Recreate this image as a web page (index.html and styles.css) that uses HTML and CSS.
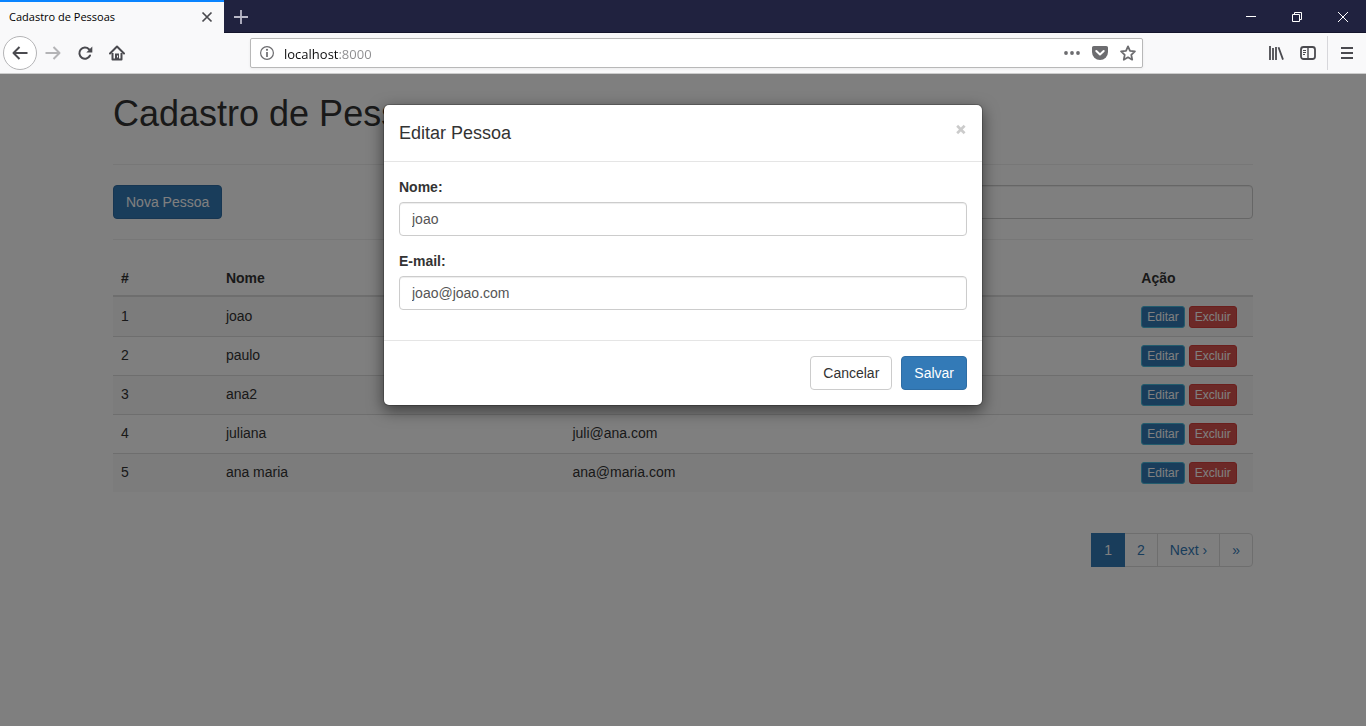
FILE: index.html
```html
<!DOCTYPE html>
<html lang="pt-BR">
<head>
<meta charset="utf-8">
<title>Cadastro de Pessoas</title>
<link rel="stylesheet" href="styles.css">
</head>
<body>
<header class="browser">
  <div class="tabbar">
    <div class="tab">
      <span class="tab-title">Cadastro de Pessoas</span>
      <button class="tab-close" type="button" aria-label="Fechar aba">
        <svg width="12" height="12" viewBox="0 0 12 12"><path d="M1.5 1.5l9 9M10.5 1.5l-9 9" stroke="#4a4a4f" stroke-width="1.7" fill="none"/></svg>
      </button>
    </div>
    <button class="new-tab" type="button" aria-label="Nova aba">
      <svg width="14" height="14" viewBox="0 0 14 14"><path d="M7 0v14M0 7h14" stroke="#b9b9c8" stroke-width="1.8" fill="none"/></svg>
    </button>
    <div class="window-controls">
      <button type="button" aria-label="Minimizar"><svg width="12" height="12" viewBox="0 0 12 12"><path d="M1 5.5h10" stroke="#fff" fill="none"/></svg></button>
      <button type="button" aria-label="Restaurar"><svg width="12" height="12" viewBox="0 0 12 12"><path d="M1.5 3.5h7v7h-7zM3.5 3.500v-2h7v7h-2" stroke="#fff" fill="none"/></svg></button>
      <button type="button" aria-label="Fechar"><svg width="12" height="12" viewBox="0 0 12 12"><path d="M1 1l10 10M11 1L1 11" stroke="#fff" fill="none"/></svg></button>
    </div>
  </div>
  <nav class="toolbar">
    <button class="tool back" type="button" aria-label="Voltar">
      <svg width="16" height="16" viewBox="0 0 16 16"><path d="M15.500 8H1.500M7.500 2l-6 6 6 6" stroke="#4a4a4f" stroke-width="2" stroke-linejoin="round" fill="none"/></svg>
    </button>
    <button class="tool" type="button" aria-label="Avançar">
      <svg width="16" height="16" viewBox="0 0 16 16"><path d="M0.500 8h14M8.500 2l6 6-6 6" stroke="#b4b4b6" stroke-width="2" stroke-linejoin="round" fill="none"/></svg>
    </button>
    <button class="tool" type="button" aria-label="Recarregar">
      <svg width="16" height="16" viewBox="0 0 16 16"><path d="M12 4.200A5.600 5.600 0 1 0 13 10.500" stroke="#4a4a4f" stroke-width="2" stroke-linecap="round" fill="none"/><path d="M15.300 1.500v6H9.300z" fill="#4a4a4f"/></svg>
    </button>
    <button class="tool" type="button" aria-label="Início">
      <svg width="16" height="16" viewBox="0 0 16 16"><path d="M1 8.500l7-7 7 7" stroke="#4a4a4f" stroke-width="2" stroke-linecap="round" stroke-linejoin="round" fill="none"/><path d="M3.500 8v6.500h9V8" stroke="#4a4a4f" stroke-width="2" fill="none" stroke-linejoin="round"/><path d="M6 8.500h4V15H6z" fill="#4a4a4f"/><path d="M8.500 10.500v2" stroke="#f9f9fa"/></svg>
    </button>
    <div class="urlbar">
      <svg class="info" width="14" height="14" viewBox="0 0 14 14"><circle cx="7" cy="7" r="6.400" stroke="#6c6c6f" stroke-width="1.200" fill="none"/><path d="M7 6v5" stroke="#6c6c6f" stroke-width="1.700"/><circle cx="7" cy="3.800" r="1.100" fill="#6c6c6f"/></svg>
      <input class="url" type="text" value="localhost:8000" aria-label="Endereço">
      <button class="url-action" type="button" aria-label="Ações da página">
        <svg width="16" height="16" viewBox="0 0 16 16" fill="#6c6c6f"><circle cx="2" cy="8" r="1.900"/><circle cx="8" cy="8" r="1.900"/><circle cx="14" cy="8" r="1.900"/></svg>
      </button>
      <button class="url-action" type="button" aria-label="Salvar no Pocket">
        <svg width="16" height="16" viewBox="0 0 16 16"><path d="M1.800 1h12.400C15.300 1 16 1.700 16 2.800V7a8 8 0 0 1-16 0V2.800C0 1.700.7 1 1.800 1z" fill="#6c6c6f"/><path d="M4.300 6L8 9.500 11.700 6" stroke="#fff" stroke-width="2" stroke-linecap="round" stroke-linejoin="round" fill="none"/></svg>
      </button>
      <button class="url-action" type="button" aria-label="Favoritar">
        <svg width="16" height="16" viewBox="0 0 16 16"><path d="M8 1.400l2 4.400 4.900.6-3.600 3.400.9 4.900L8 12.300l-4.200 2.400.9-4.900L1.100 6.400 6 5.800z" stroke="#6c6c6f" stroke-width="1.800" stroke-linejoin="round" fill="none"/></svg>
      </button>
    </div>
    <button class="tool" type="button" aria-label="Biblioteca">
      <svg width="16" height="16" viewBox="0 0 16 16"><path d="M2 1v14M5 3v12M8 2v13M10.500 2.300L15 14.600" stroke="#4a4a4f" stroke-width="1.800" fill="none"/></svg>
    </button>
    <button class="tool" type="button" aria-label="Barra lateral">
      <svg width="16" height="16" viewBox="0 0 16 16"><rect x="1" y="2" width="14" height="12" rx="2.500" stroke="#4a4a4f" stroke-width="1.800" fill="none"/><path d="M8 2v12" stroke="#4a4a4f" stroke-width="1.400"/><path d="M3 5.500h3M3 7.500h3M3 9.500h2" stroke="#4a4a4f"/></svg>
    </button>
    <span class="divider"></span>
    <button class="tool" type="button" aria-label="Menu">
      <svg width="16" height="16" viewBox="0 0 16 16"><path d="M2 3h12M2 8h12M2 13h12" stroke="#4a4a4f" stroke-width="1.800"/></svg>
    </button>
  </nav>
</header>

<div class="page">
  <main class="container">
    <h1>Cadastro de Pessoas</h1>
    <div class="actions">
      <button class="btn btn-primary" type="button">Nova Pessoa</button>
      <input class="form-control search" type="search" aria-label="Pesquisar">
    </div>
    <table class="table">
      <colgroup><col class="col-id"><col class="col-name"><col class="col-mail"><col class="col-action"></colgroup>
      <thead>
        <tr><th>#</th><th>Nome</th><th>E-mail</th><th>Ação</th></tr>
      </thead>
      <tbody>
        <tr><td>1</td><td>joao</td><td>joao@joao.com</td><td><div class="row-actions"><button class="btn btn-xs btn-edit" type="button">Editar</button><button class="btn btn-xs btn-danger" type="button">Excluir</button></div></td></tr>
        <tr><td>2</td><td>paulo</td><td></td><td><div class="row-actions"><button class="btn btn-xs btn-edit" type="button">Editar</button><button class="btn btn-xs btn-danger" type="button">Excluir</button></div></td></tr>
        <tr><td>3</td><td>ana2</td><td></td><td><div class="row-actions"><button class="btn btn-xs btn-edit" type="button">Editar</button><button class="btn btn-xs btn-danger" type="button">Excluir</button></div></td></tr>
        <tr><td>4</td><td>juliana</td><td>juli@ana.com</td><td><div class="row-actions"><button class="btn btn-xs btn-edit" type="button">Editar</button><button class="btn btn-xs btn-danger" type="button">Excluir</button></div></td></tr>
        <tr><td>5</td><td>ana maria</td><td>ana@maria.com</td><td><div class="row-actions"><button class="btn btn-xs btn-edit" type="button">Editar</button><button class="btn btn-xs btn-danger" type="button">Excluir</button></div></td></tr>
      </tbody>
    </table>
    <ul class="pagination">
      <li><a class="active" href="#1">1</a></li>
      <li><a href="#2">2</a></li>
      <li><a href="#next">Next ›</a></li>
      <li><a href="#last">»</a></li>
    </ul>
  </main>

  <div class="backdrop">
    <form class="modal" role="dialog" aria-labelledby="modal-title">
      <div class="modal-header">
        <h4 id="modal-title">Editar Pessoa</h4>
        <button class="close" type="button" aria-label="Fechar">×</button>
      </div>
      <div class="modal-body">
        <div class="form-group">
          <label for="nome">Nome:</label>
          <input class="form-control" id="nome" type="text" value="joao">
        </div>
        <div class="form-group">
          <label for="email">E-mail:</label>
          <input class="form-control" id="email" type="email" value="joao@joao.com">
        </div>
      </div>
      <div class="modal-footer">
        <button class="btn btn-default" type="button">Cancelar</button>
        <button class="btn btn-primary" type="button">Salvar</button>
      </div>
    </form>
  </div>
</div>
</body>
</html>
```

FILE: styles.css
```css
* { box-sizing: border-box; }

body {
  margin: 0;
  min-height: 100vh;
  display: flex;
  flex-direction: column;
  font-family: "Liberation Sans", Arial, sans-serif;
  font-size: 14px;
  line-height: 20px;
  color: #333;
  background: #fff;
}

button, input { font: inherit; }
button { cursor: pointer; }
svg { display: block; }

/* Browser chrome */
.browser { font-family: "Open Sans", "Noto Sans", sans-serif; }

.browser button {
  display: flex;
  align-items: center;
  justify-content: center;
  padding: 0;
  border: 0;
  background: none;
}

.tabbar {
  display: flex;
  height: 33px;
  background: #20223f;
  box-shadow: inset 0 -1px #14152c;
}

.tab {
  display: flex;
  align-items: center;
  justify-content: space-between;
  width: 224px;
  padding: 0 11px 2px 9px;
  background: #f9f9fa;
  border-top: 2px solid #0a84ff;
  font-size: 11px;
  color: #000;
}

.browser .new-tab { width: 34px; }
.window-controls { display: flex; margin-left: auto; }
.window-controls button { width: 46px; }

.toolbar {
  display: flex;
  align-items: center;
  height: 41px;
  padding: 0 3px;
  background: #f9f9fa;
  border-bottom: 1px solid #ccc;
}

.tool { width: 32px; height: 34px; flex: none; }

.browser .back {
  width: 34px;
  border: 1px solid #b4b4b6;
  border-radius: 50%;
  background: #fff;
}

.urlbar {
  flex: 1;
  display: flex;
  align-items: center;
  height: 30px;
  min-width: 0;
  margin: 0 117px;
  padding: 0 0 0 9px;
  background: #fff;
  border: 1px solid #b8b8b8;
  border-radius: 2px;
  box-shadow: 0 1px 3px rgba(0, 0, 0, .06);
}

.url {
  flex: 1;
  min-width: 0;
  margin-left: 10px;
  padding: 2px 0 0;
  border: 0;
  outline: 0;
  font-size: 13px;
  color: transparent;
  background: linear-gradient(90deg, #0c0c0d 55px, #8c8c8e 55px);
  -webkit-background-clip: text;
  background-clip: text;
}

.url-action { width: 28px; height: 28px; flex: none; }

.divider {
  width: 1px;
  height: 34px;
  margin: 0 3px;
  background: #d7d7db;
}

/* Page */
.page {
  position: relative;
  flex: 1;
}

.container {
  max-width: 1170px;
  margin: 0 auto;
  padding: 0 15px;
}

h1 {
  margin: 0;
  padding: 20px 0 30px;
  font-size: 36px;
  font-weight: 500;
  line-height: 40px;
}

.actions {
  display: flex;
  align-items: center;
  justify-content: space-between;
  margin-bottom: 20px;
  padding: 20px 0;
  border-top: 1px solid #eee;
  border-bottom: 1px solid #eee;
}

.form-control {
  display: block;
  width: 100%;
  height: 34px;
  padding: 6px 12px;
  color: #555;
  background: #fff;
  border: 1px solid #ccc;
  border-radius: 4px;
  box-shadow: inset 0 1px 1px rgba(0, 0, 0, .075);
}

.search { width: 50%; }

.btn {
  padding: 6px 12px;
  border: 1px solid transparent;
  border-radius: 4px;
  white-space: nowrap;
}

.btn-primary { color: #fff; background: #337ab7; border-color: #2e6da4; }
.btn-default { color: #333; background: #fff; border-color: #ccc; }
.btn-edit { color: #fff; background: #337ab7; border-color: #46b8da; }
.btn-danger { color: #fff; background: #d9534f; border-color: #d43f3a; }

.btn-xs {
  padding: 1px 5px;
  font-size: 12px;
  line-height: 18px;
  border-radius: 3px;
}

.table {
  width: 100%;
  table-layout: fixed;
  border-collapse: separate;
  border-spacing: 0;
}

.col-id { width: 9.2%; }
.col-name { width: 30.4%; }
.col-mail { width: 49.9%; }
.col-action { width: 10.5%; }

th {
  padding: 8px;
  text-align: left;
  border-bottom: 2px solid #ddd;
}

td {
  padding: 8px;
  vertical-align: top;
  border-top: 1px solid #ddd;
}

tbody tr:first-child td { border-top-color: transparent; }
tbody tr:nth-child(odd) { background: #f9f9f9; }
thead th { padding-bottom: 7px; }
.row-actions { display: flex; gap: 4px; }

.pagination {
  display: flex;
  justify-content: flex-end;
  margin: 0;
  padding: 41px 0 20px;
  list-style: none;
}

.pagination a {
  display: block;
  margin-left: -1px;
  padding: 6px 12px;
  color: #337ab7;
  background: #fff;
  border: 1px solid #ddd;
  text-decoration: none;
}

.pagination .active {
  position: relative;
  color: #fff;
  background: #337ab7;
  border-color: #337ab7;
}

.pagination li:last-child a { border-radius: 0 4px 4px 0; }

/* Dialog */
.backdrop {
  position: absolute;
  inset: 0;
  background: rgba(0, 0, 0, .5);
}

.modal {
  max-width: 600px;
  margin: 30px auto;
  background: #fff;
  background-clip: padding-box;
  border: 1px solid rgba(0, 0, 0, .2);
  border-radius: 6px;
  box-shadow: 0 5px 15px rgba(0, 0, 0, .5);
}

.modal-header {
  display: flex;
  align-items: flex-start;
  justify-content: space-between;
  padding: 15px;
  border-bottom: 1px solid #e5e5e5;
}

.modal-header h4 {
  margin: 0;
  font-size: 18px;
  font-weight: 500;
  line-height: 26px;
}

.close {
  padding: 0;
  border: 0;
  background: none;
  font-family: "Open Sans", sans-serif;
  font-size: 21px;
  font-weight: 800;
  line-height: 18px;
  color: #000;
  opacity: .2;
}

.modal-body { padding: 15px; }
.form-group { margin-bottom: 15px; }

label {
  display: block;
  margin-bottom: 5px;
  font-weight: bold;
}

.modal-footer {
  display: flex;
  justify-content: flex-end;
  gap: 9px;
  padding: 15px;
  border-top: 1px solid #e5e5e5;
}
```
